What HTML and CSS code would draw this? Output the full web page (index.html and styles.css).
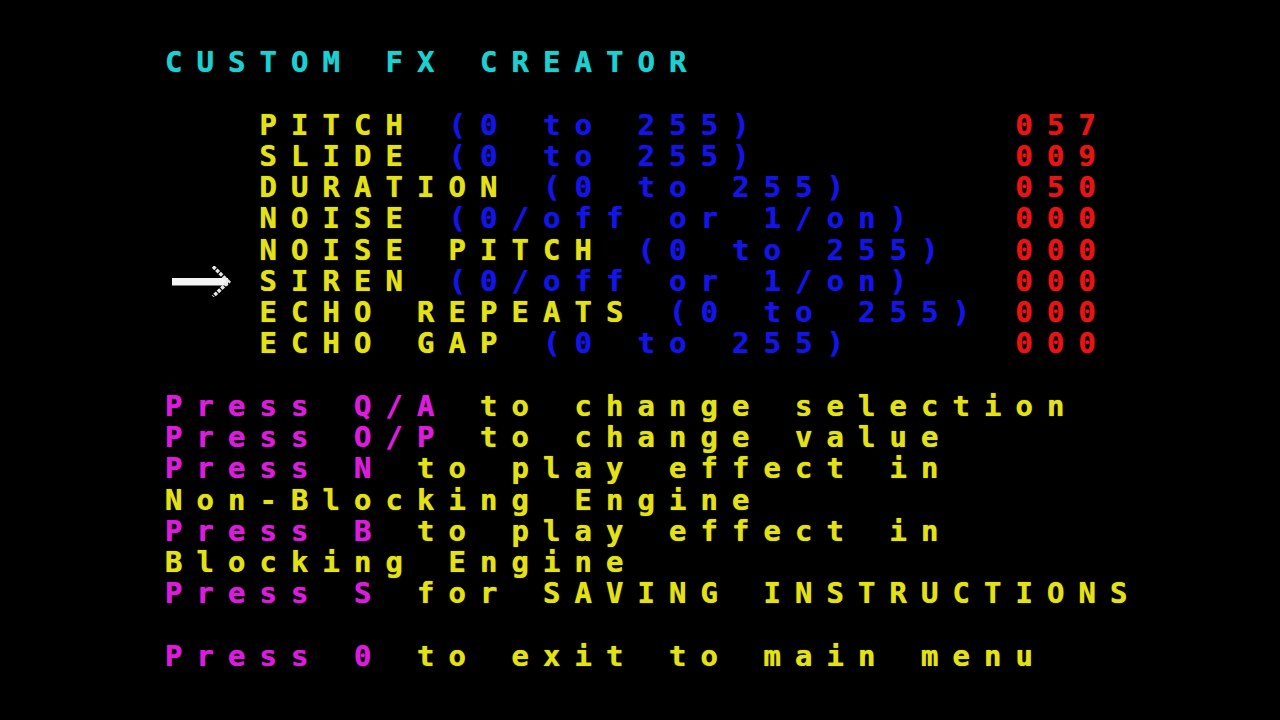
FILE: index.html
```html
<!DOCTYPE html>
<html lang="en">
<head>
<meta charset="utf-8">
<title>Custom FX Creator</title>
<link rel="stylesheet" href="styles.css">
</head>
<body>
<main class="screen">
  <div class="line cyan">CUSTOM FX CREATOR</div>
  <div class="line"></div>

  <div class="row"><span class="mark"></span><span class="label"><span class="yellow">PITCH</span> <span class="blue">(0 to 255)</span></span><span class="red">057</span></div>
  <div class="row"><span class="mark"></span><span class="label"><span class="yellow">SLIDE</span> <span class="blue">(0 to 255)</span></span><span class="red">009</span></div>
  <div class="row"><span class="mark"></span><span class="label"><span class="yellow">DURATION</span> <span class="blue">(0 to 255)</span></span><span class="red">050</span></div>
  <div class="row"><span class="mark"></span><span class="label"><span class="yellow">NOISE</span> <span class="blue">(0/off or 1/on)</span></span><span class="red">000</span></div>
  <div class="row"><span class="mark"></span><span class="label"><span class="yellow">NOISE PITCH</span> <span class="blue">(0 to 255)</span></span><span class="red">000</span></div>
  <div class="row"><span class="mark"><svg class="arrow" width="94.5" height="31.25" viewBox="0 0 94.5 31.25"><rect x="7" y="12" width="56" height="7.5" fill="#f4f4f4"/><path d="M48 0.5 L63.5 15.8 L48 30.5" fill="none" stroke="#e6e6e6" stroke-width="3.5" stroke-dasharray="3.5 1.2"/></svg></span><span class="label"><span class="yellow">SIREN</span> <span class="blue">(0/off or 1/on)</span></span><span class="red">000</span></div>
  <div class="row"><span class="mark"></span><span class="label"><span class="yellow">ECHO REPEATS</span> <span class="blue">(0 to 255)</span></span><span class="red">000</span></div>
  <div class="row"><span class="mark"></span><span class="label"><span class="yellow">ECHO GAP</span> <span class="blue">(0 to 255)</span></span><span class="red">000</span></div>

  <div class="line"></div>
  <div class="line"><span class="magenta">Press Q/A</span> <span class="yellow">to change selection</span></div>
  <div class="line"><span class="magenta">Press O/P</span> <span class="yellow">to change value</span></div>
  <div class="line"><span class="magenta">Press N</span> <span class="yellow">to play effect in</span></div>
  <div class="line yellow">Non-Blocking Engine</div>
  <div class="line"><span class="magenta">Press B</span> <span class="yellow">to play effect in</span></div>
  <div class="line yellow">Blocking Engine</div>
  <div class="line"><span class="magenta">Press S</span> <span class="yellow">for SAVING INSTRUCTIONS</span></div>
  <div class="line"></div>
  <div class="line"><span class="magenta">Press 0</span> <span class="yellow">to exit to main menu</span></div>
</main>
</body>
</html>
```
FILE: styles.css
```css
html, body {
  margin: 0;
  padding: 0;
  background: #000;
  width: 1280px;
  height: 720px;
  overflow: hidden;
}

.screen {
  display: block;
  padding: 47px 0 0 165px;
  font-family: "DejaVu Sans Mono", "Liberation Mono", monospace;
  font-weight: bold;
  font-size: 29px;
  line-height: 31.25px;
  letter-spacing: 14.04px;
}

.line {
  height: 31.25px;
  white-space: pre;
}

.row {
  display: grid;
  grid-template-columns: 94.5px 756px auto;
  height: 31.25px;
  align-items: start;
  white-space: pre;
}

.mark {
  display: block;
  height: 31.25px;
}

.arrow {
  display: block;
}

.cyan { color: #1cd0d0; text-shadow: 0 0 1px #1cd0d0; }
.yellow { color: #e2e214; text-shadow: 0 0 1px #e2e214; }
.blue { color: #1414e6; text-shadow: 0 0 1px #1414e6; }
.red { color: #e61414; text-shadow: 0 0 1px #e61414; }
.magenta { color: #dc1cdc; text-shadow: 0 0 1px #dc1cdc; }
```
